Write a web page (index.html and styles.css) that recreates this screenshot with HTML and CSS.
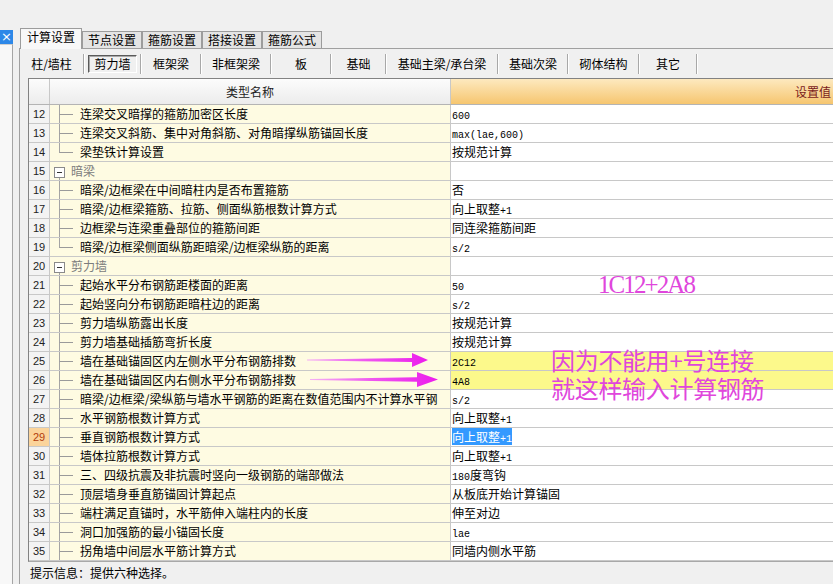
FILE: index.html
```html
<!DOCTYPE html>
<html lang="zh-CN">
<head>
<meta charset="utf-8">
<title>计算设置</title>
<link rel="stylesheet" href="styles.css">
</head>
<body>
<div class="app">
  <aside class="side">
    <div class="close">×</div>
    <div class="side-body"></div>
  </aside>
  <main class="main">
    <nav class="tabs">
      <div class="tab active">计算设置</div>
      <div class="tab">节点设置</div>
      <div class="tab">箍筋设置</div>
      <div class="tab">搭接设置</div>
      <div class="tab">箍筋公式</div>
    </nav>
    <section class="panel">
      <div class="subtabs">
        <div class="st">柱/墙柱</div><i class="sep"></i>
        <div class="st"><span class="pressed">剪力墙</span></div><i class="sep"></i>
        <div class="st">框架梁</div><i class="sep"></i>
        <div class="st">非框架梁</div><i class="sep"></i>
        <div class="st">板</div><i class="sep"></i>
        <div class="st">基础</div><i class="sep"></i>
        <div class="st">基础主梁/承台梁</div><i class="sep"></i>
        <div class="st">基础次梁</div><i class="sep"></i>
        <div class="st">砌体结构</div><i class="sep"></i>
        <div class="st">其它</div><i class="sep"></i>
      </div>

      <div class="grid">
        <div class="row head">
          <div class="c-num"></div>
          <div class="c-name">类型名称</div>
          <div class="c-val">设置值</div>
        </div>

        <div class="row"><div class="c-num">12</div><div class="c-name"><span class="tree"><i></i><i></i></span>连梁交叉暗撑的箍筋加密区长度</div><div class="c-val"><span class="a">600</span></div></div>
        <div class="row"><div class="c-num">13</div><div class="c-name"><span class="tree"><i></i><i></i></span>连梁交叉斜筋、集中对角斜筋、对角暗撑纵筋锚固长度</div><div class="c-val"><span class="a">max(lae,600)</span></div></div>
        <div class="row"><div class="c-num">14</div><div class="c-name"><span class="tree last"><i></i><i></i></span>梁垫铁计算设置</div><div class="c-val">按规范计算</div></div>
        <div class="row group"><div class="c-num">15</div><div class="c-name"><span class="gnode"><b class="gbox"></b></span>暗梁</div><div class="c-val"></div></div>
        <div class="row"><div class="c-num">16</div><div class="c-name"><span class="tree"><i></i><i></i></span>暗梁/边框梁在中间暗柱内是否布置箍筋</div><div class="c-val">否</div></div>
        <div class="row"><div class="c-num">17</div><div class="c-name"><span class="tree"><i></i><i></i></span>暗梁/边框梁箍筋、拉筋、侧面纵筋根数计算方式</div><div class="c-val">向上取整<span class="a">+1</span></div></div>
        <div class="row"><div class="c-num">18</div><div class="c-name"><span class="tree"><i></i><i></i></span>边框梁与连梁重叠部位的箍筋间距</div><div class="c-val">同连梁箍筋间距</div></div>
        <div class="row"><div class="c-num">19</div><div class="c-name"><span class="tree last"><i></i><i></i></span>暗梁/边框梁侧面纵筋距暗梁/边框梁纵筋的距离</div><div class="c-val"><span class="a">s/2</span></div></div>
        <div class="row group"><div class="c-num">20</div><div class="c-name"><span class="gnode"><b class="gbox"></b></span>剪力墙</div><div class="c-val"></div></div>
        <div class="row"><div class="c-num">21</div><div class="c-name"><span class="tree"><i></i><i></i></span>起始水平分布钢筋距楼面的距离</div><div class="c-val"><span class="a">50</span></div></div>
        <div class="row"><div class="c-num">22</div><div class="c-name"><span class="tree"><i></i><i></i></span>起始竖向分布钢筋距暗柱边的距离</div><div class="c-val"><span class="a">s/2</span></div></div>
        <div class="row"><div class="c-num">23</div><div class="c-name"><span class="tree"><i></i><i></i></span>剪力墙纵筋露出长度</div><div class="c-val">按规范计算</div></div>
        <div class="row"><div class="c-num">24</div><div class="c-name"><span class="tree"><i></i><i></i></span>剪力墙基础插筋弯折长度</div><div class="c-val">按规范计算</div></div>
        <div class="row hl"><div class="c-num">25</div><div class="c-name"><span class="tree"><i></i><i></i></span>墙在基础锚固区内左侧水平分布钢筋排数</div><div class="c-val"><span class="a">2C12</span></div></div>
        <div class="row hl"><div class="c-num">26</div><div class="c-name"><span class="tree"><i></i><i></i></span>墙在基础锚固区内右侧水平分布钢筋排数</div><div class="c-val"><span class="a">4A8</span></div></div>
        <div class="row"><div class="c-num">27</div><div class="c-name"><span class="tree"><i></i><i></i></span>暗梁/边框梁/梁纵筋与墙水平钢筋的距离在数值范围内不计算水平钢</div><div class="c-val"><span class="a">s/2</span></div></div>
        <div class="row"><div class="c-num">28</div><div class="c-name"><span class="tree"><i></i><i></i></span>水平钢筋根数计算方式</div><div class="c-val">向上取整<span class="a">+1</span></div></div>
        <div class="row"><div class="c-num cur">29</div><div class="c-name"><span class="tree"><i></i><i></i></span>垂直钢筋根数计算方式</div><div class="c-val"><span class="sel">向上取整<span class="a">+1</span></span></div></div>
        <div class="row"><div class="c-num">30</div><div class="c-name"><span class="tree"><i></i><i></i></span>墙体拉筋根数计算方式</div><div class="c-val">向上取整<span class="a">+1</span></div></div>
        <div class="row"><div class="c-num">31</div><div class="c-name"><span class="tree"><i></i><i></i></span>三、四级抗震及非抗震时竖向一级钢筋的端部做法</div><div class="c-val"><span class="a">180</span>度弯钩</div></div>
        <div class="row"><div class="c-num">32</div><div class="c-name"><span class="tree"><i></i><i></i></span>顶层墙身垂直筋锚固计算起点</div><div class="c-val">从板底开始计算锚固</div></div>
        <div class="row"><div class="c-num">33</div><div class="c-name"><span class="tree"><i></i><i></i></span>端柱满足直锚时，水平筋伸入端柱内的长度</div><div class="c-val">伸至对边</div></div>
        <div class="row"><div class="c-num">34</div><div class="c-name"><span class="tree"><i></i><i></i></span>洞口加强筋的最小锚固长度</div><div class="c-val"><span class="a">lae</span></div></div>
        <div class="row"><div class="c-num">35</div><div class="c-name"><span class="tree"><i></i><i></i></span>拐角墙中间层水平筋计算方式</div><div class="c-val">同墙内侧水平筋</div></div>

        <div class="note note-a">1C12+2A8</div>
        <div class="note note-b">因为不能用+号连接<br>就这样输入计算钢筋</div>
        <svg class="arrows" width="145" height="42" viewBox="0 0 145 42">
          <defs>
            <linearGradient id="ag" x1="0" y1="0" x2="1" y2="0">
              <stop offset="0" stop-color="#f4b0f4"/>
              <stop offset="0.5" stop-color="#ef55ef"/>
              <stop offset="1" stop-color="#ec1cec"/>
            </linearGradient>
          </defs>
          <path d="M7 9.5 L112 8 L112 3 L128 10 L112 17 L112 12 L7 10.5 Z" fill="url(#ag)"/>
          <path d="M10 29 L117 27.3 L117 22 L138 29.5 L117 37 L117 31.7 L10 30 Z" fill="url(#ag)"/>
        </svg>
      </div>

      <div class="status">提示信息：提供六种选择。</div>
    </section>
  </main>
</div>
</body>
</html>
```

FILE: styles.css
```css
* {
  box-sizing: border-box;
  margin: 0;
  padding: 0;
}

html,
body {
  width: 833px;
  height: 584px;
  overflow: hidden;
}

body {
  background: #f0f0f0;
  font-family: "Noto Sans CJK SC", "Noto Sans", sans-serif;
  font-size: 12px;
  color: #000;
}

.app {
  display: flex;
  height: 584px;
}

/* left docked strip */
.side {
  width: 13px;
  flex: none;
  display: flex;
  flex-direction: column;
}

.close {
  margin-top: 30px;
  height: 14px;
  width: 13px;
  background: #2d88e8;
  color: #fff;
  font-family: "DejaVu Sans", sans-serif;
  font-size: 13px;
  line-height: 14px;
  text-align: center;
}

.side-body {
  flex: 1;
  border-right: 1px solid #a5a5a5;
  border-top: 1px solid #d0d0d0;
  background: #f8f8f8;
}

.main {
  flex: 1;
  min-width: 0;
  padding: 28px 0 0 6px;
  display: flex;
  flex-direction: column;
  overflow: hidden;
}

/* top tabs */
.tabs {
  display: flex;
  align-items: flex-end;
  height: 20px;
  padding-left: 1px;
  position: relative;
  z-index: 1;
}

.tab {
  height: 17px;
  padding: 0 5px;
  border: 1px solid #9c9c9c;
  border-bottom: 0;
  background: #e4e4e4;
  line-height: 16px;
  white-space: nowrap;
}

.tab.active {
  height: 21px;
  margin-bottom: -1px;
  padding: 0 6px;
  background: #f8f8f8;
  line-height: 16px;
}

.panel {
  flex: 1;
  min-width: 0;
  border-left: 1px solid #a0a0a0;
  border-top: 1px solid #a0a0a0;
  display: flex;
  flex-direction: column;
  overflow: hidden;
}

/* second level tabs */
.subtabs {
  flex: none;
  height: 29px;
  display: grid;
  grid-template-columns: 63px 2px 55px 2px 58px 2px 68px 2px 58px 2px 53px 2px 110px 2px 68px 2px 69px 2px 56px 2px;
  align-items: center;
}

.st {
  height: 29px;
  display: flex;
  align-items: center;
  justify-content: center;
  white-space: nowrap;
  line-height: 16px;
}

.pressed {
  display: block;
  height: 18px;
  padding: 0 5px;
  border: 1px solid;
  border-color: #5a5a5a #ffffff #ffffff #5a5a5a;
  box-shadow: inset 1px 1px 0 #a8a8a8;
  line-height: 16px;
}

.sep {
  display: block;
  width: 2px;
  height: 20px;
  border-left: 1px solid #a8a8a8;
  border-right: 1px solid #ffffff;
}

/* property grid */
.grid {
  position: relative;
  flex: none;
  width: 1147px;
  margin-left: 8px;
  border-top: 1px solid #828282;
  border-left: 1px solid #828282;
  border-bottom: 1px solid #a8a8a8;
}

.row {
  display: flex;
  height: 19px;
  border-bottom: 1px solid #c8c8c8;
}

.c-num {
  flex: none;
  width: 21px;
  border-right: 1px solid #c8c8c8;
  background: #f3f3f3;
  padding-left: 4px;
  font-family: "Liberation Sans", sans-serif;
  font-size: 11px;
  line-height: 18px;
  color: #222;
}

.c-num.cur {
  background: #fbd49b;
  color: #b23c0c;
}

.c-name {
  flex: none;
  width: 401px;
  border-right: 1px solid #c8c8c8;
  background: #fefbe2;
  display: flex;
  align-items: center;
  white-space: nowrap;
  overflow: hidden;
  line-height: 18px;
}

.c-val {
  flex: none;
  width: 723px;
  background: #fff;
  padding-left: 1px;
  line-height: 18px;
  white-space: nowrap;
}

.row.hl .c-val {
  background: #fcf98b;
}

.head {
  height: 26px;
  border-bottom-color: #b4b4b4;
}

.head .c-num,
.head .c-name {
  background: linear-gradient(#fcfcfc, #ececec);
  justify-content: center;
  line-height: 25px;
  color: #222;
}

.head .c-val {
  background: linear-gradient(#fde9bf, #f6c670);
  text-align: center;
  line-height: 25px;
  color: #7a1b1b;
}

.a {
  font-family: "Liberation Mono", monospace;
  font-size: 10px;
}

.sel {
  background: #3399ff;
  color: #fff;
}

/* tree connectors */
.tree {
  flex: none;
  align-self: stretch;
  width: 14px;
  margin: 0 7px 0 9px;
  display: flex;
  flex-direction: column;
}

.tree i {
  flex: 1;
  border-left: 1px solid #a4a4a4;
}

.tree i:first-child {
  border-bottom: 1px solid #9a9a9a;
}

.tree.last i:last-child {
  border-left-color: transparent;
}

.group .c-name {
  color: #7c7c7c;
}

.gnode {
  flex: none;
  align-self: stretch;
  width: 11px;
  margin: 0 6px 0 4px;
  display: flex;
  flex-direction: column;
  align-items: center;
  padding-top: 5px;
}

.gnode::after {
  content: "";
  flex: 1;
  width: 0;
  border-left: 1px solid #a4a4a4;
}

.gbox {
  display: flex;
  align-items: center;
  justify-content: center;
  width: 11px;
  height: 11px;
  border: 1px solid #8a8a8a;
  background: #fff;
}

.gbox::before {
  content: "";
  width: 5px;
  height: 1px;
  background: #333;
}

/* annotations drawn over the grid */
.note {
  position: absolute;
  color: #e046dc;
  white-space: nowrap;
}

.note-a {
  left: 569px;
  top: 193px;
  font-family: "Liberation Serif", serif;
  font-size: 25px;
  line-height: 25px;
  letter-spacing: -1.9px;
}

.note-b {
  left: 522px;
  top: 267px;
  font-family: "Noto Sans CJK SC", sans-serif;
  font-size: 24px;
  line-height: 28px;
  letter-spacing: -0.3px;
}

.arrows {
  position: absolute;
  left: 271px;
  top: 271px;
}

.status {
  padding-left: 10px;
  line-height: 22px;
  height: 22px;
}
```
